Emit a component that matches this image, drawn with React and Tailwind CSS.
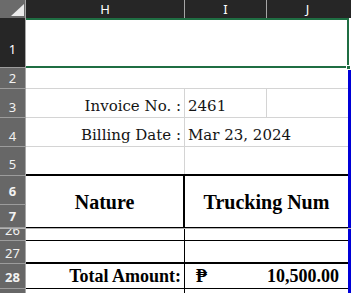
import React from 'react';

const serif = { fontFamily: '"DejaVu Serif", serif' };
const bold = { fontFamily: '"Liberation Serif", "DejaVu Serif", serif' };
const ui = { fontFamily: '"Noto Sans", "Open Sans", sans-serif' };

const RowHead = ({ label, className = '', dark = false, textClass = 'pb-[3px]' }) => (
    <div
        style={ui}
        className={`w-[26px] shrink-0 flex items-end justify-center text-[13px] leading-[14px] border-r border-r-[#a6a6a6] border-b border-b-[#9c9c9c] overflow-hidden ${dark ? 'bg-[#262626] text-white' : 'bg-[#676767] text-[#f2f2f2]'} ${className}`}
    >
        <span className={textClass}>{label}</span>
    </div>
);

const Blue = () => <div className="w-[3px] shrink-0 bg-[#0000d8]" />;

const App = () => {
    return (
        <div className="w-[351px] h-[293px] overflow-hidden bg-white flex flex-col">
            {/* column headers */}
            <div style={ui} className="h-[18px] shrink-0 flex bg-[#262626] text-white text-[13px] leading-[18px]">
                <div className="w-[26px] shrink-0 bg-[#6b6b6b] border-r border-r-[#a6a6a6] relative">
                    <svg className="absolute left-[11px] top-[4px]" width="13" height="12" viewBox="0 0 13 12">
                        <polygon points="13,0 13,12 0,12" fill="#ececec" />
                    </svg>
                </div>
                <div className="w-[159px] shrink-0 text-center border-r border-r-[#a6a6a6]">H</div>
                <div className="w-[82px] shrink-0 text-center border-r border-r-[#a6a6a6]">I</div>
                <div className="w-[81px] shrink-0 text-center">J</div>
                <div className="flex-1" />
            </div>

            {/* row 1 */}
            <div className="h-[50px] shrink-0 flex">
                <RowHead label="1" dark className="border-b-[#7a7a7a]" textClass="pb-[11px]" />
                <div className="w-[323px] shrink-0 border-t-2 border-b-2 border-r-2 border-[#1f6e43] relative">
                    <div className="absolute -right-[4px] -bottom-[4px] w-[5px] h-[5px] bg-[#1f6e43] border border-white" />
                </div>
                <div className="w-[2px] shrink-0 bg-white" />
            </div>

            {/* row 2 */}
            <div className="h-[21px] shrink-0 flex">
                <RowHead label="2" />
                <div className="w-[322px] shrink-0 border-b border-b-[#d4d4d4]" />
                <Blue />
            </div>

            {/* row 3 */}
            <div style={serif} className="h-[29px] shrink-0 flex text-[15px] leading-[18px] text-[#141414]">
                <RowHead label="3" />
                <div className="w-[159px] shrink-0 flex items-end justify-end pr-[3px] pb-[2px] border-r border-b border-[#d4d4d4]">Invoice No. :</div>
                <div className="w-[82px] shrink-0 flex items-end pl-[3px] pb-[2px] border-r border-b border-[#d4d4d4]">2461</div>
                <div className="w-[81px] shrink-0 border-b border-[#d4d4d4]" />
                <Blue />
            </div>

            {/* row 4 */}
            <div style={serif} className="h-[29px] shrink-0 flex text-[15px] leading-[18px] text-[#141414]">
                <RowHead label="4" />
                <div className="w-[159px] shrink-0 flex items-end justify-end pr-[3px] pb-[2px] border-r border-b border-[#d4d4d4]">Billing Date :</div>
                <div className="w-[163px] shrink-0 flex items-end pl-[3px] pb-[2px] border-b border-[#d4d4d4]">Mar 23, 2024</div>
                <Blue />
            </div>

            {/* row 5 */}
            <div className="h-[29px] shrink-0 flex">
                <RowHead label="5" textClass="pb-[4px]" />
                <div className="w-[159px] shrink-0 flex border-b-2 border-b-black">
                    <div className="flex-1 border-r border-r-[#d4d4d4]" />
                </div>
                <div className="w-[163px] shrink-0 border-b-2 border-b-black" />
                <Blue />
            </div>

            {/* rows 6-7 merged */}
            <div style={bold} className="h-[52px] shrink-0 flex font-bold text-[20px] text-black">
                <div className="w-[26px] shrink-0 flex flex-col">
                    <RowHead label="6" className="h-[29px]" textClass="pb-[6px]" />
                    <RowHead label="7" className="h-[23px]" textClass="pb-[4px]" />
                </div>
                <div className="w-[159px] shrink-0 flex items-center justify-center pt-[1px] border-r-2 border-r-black border-b border-b-black">Nature</div>
                <div className="w-[163px] shrink-0 flex items-center justify-center pt-[1px] border-b border-b-black">Trucking Num</div>
                <Blue />
            </div>

            {/* freeze pane line */}
            <div className="h-[1px] shrink-0 bg-[#b4b4b4]" />

            {/* row 26 */}
            <div className="h-[12px] shrink-0 flex">
                <RowHead label="26" className="items-start" textClass="-mt-[6px]" />
                <div className="w-[159px] shrink-0 border-r border-b border-black" />
                <div className="w-[163px] shrink-0 border-b border-black" />
                <Blue />
            </div>

            {/* row 27 */}
            <div className="h-[23px] shrink-0 flex">
                <RowHead label="27" textClass="pb-[3px]" />
                <div className="w-[159px] shrink-0 flex border-b-2 border-b-black">
                    <div className="flex-1 border-r border-r-black" />
                </div>
                <div className="w-[163px] shrink-0 border-b-2 border-b-black" />
                <Blue />
            </div>

            {/* row 28 */}
            <div style={bold} className="h-[25px] shrink-0 flex font-bold text-[18px] leading-[20px] text-black">
                <RowHead label="28" textClass="pb-[4px]" />
                <div className="w-[159px] shrink-0 flex items-end justify-end pr-[3px] pb-[2px] border-r border-b border-black">Total Amount:</div>
                <div className="w-[163px] shrink-0 flex items-end justify-between pl-[11px] pr-[9px] pb-[2px] border-b border-black">
                    <span>₱</span>
                    <span>10,500.00</span>
                </div>
                <Blue />
            </div>

            {/* row 29 */}
            <div className="flex-1 flex">
                <div className="w-[26px] shrink-0 bg-[#676767] border-r border-r-[#a6a6a6]" />
                <div className="w-[159px] shrink-0 border-r border-black" />
                <div className="w-[163px] shrink-0" />
                <Blue />
            </div>
        </div>
    );
};

export default App;
